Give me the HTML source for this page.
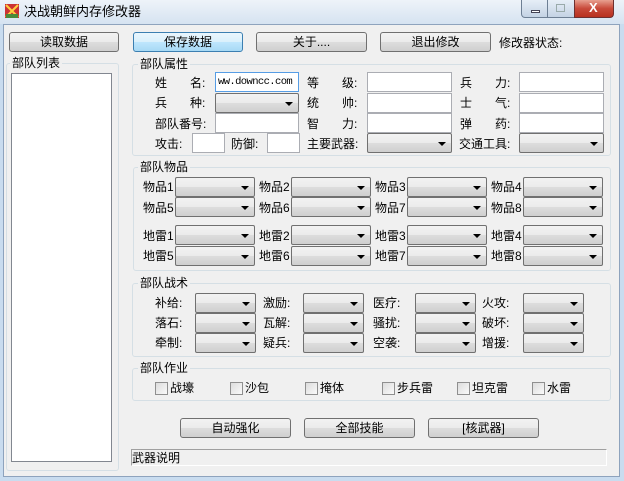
<!DOCTYPE html>
<html><head><meta charset="utf-8"><style>
*{box-sizing:border-box;margin:0;padding:0}
body{width:624px;height:481px;overflow:hidden;background:#c9dcef;font-family:"Liberation Sans","Noto Sans CJK SC","WenQuanYi Zen Hei",sans-serif;font-size:12px;color:#000;position:relative}
.a{position:absolute}
#tb{left:0;top:0;width:624px;height:24px;background:linear-gradient(#eef3f9,#d6e3f1)}
#cl{left:3px;top:24px;width:617px;height:453px;background:#f0f0f0;border:1px solid #8ea3bd}
.t{position:absolute;white-space:nowrap;line-height:14px}
.btn{position:absolute;height:20px;border:1px solid #707070;border-radius:3px;background:linear-gradient(#f2f2f2 0,#ebebeb 50%,#dddddd 51%,#cfcfcf 100%);text-align:center;line-height:18px;font-size:12px}
.btn.h{border-color:#3c7fb1;background:linear-gradient(#eaf6fd 0,#d9f0fc 50%,#bee6fd 51%,#a7d9f5 100%)}
.gb{position:absolute;border:1px solid #d5dfe5;border-radius:3px}
.gl{position:absolute;background:#f0f0f0;padding:0 2px;line-height:14px}
.in{position:absolute;height:20px;background:#fff;border:1px solid #abadb3;border-top-color:#abadb3}
.sel{position:absolute;height:20px;border:1px solid #707070;border-radius:2px;background:linear-gradient(#f2f2f2 0,#ebebeb 50%,#dddddd 51%,#cfcfcf 100%)}
.sel:after{content:"";position:absolute;right:5px;top:8px;border-left:4px solid transparent;border-right:4px solid transparent;border-top:4px solid #000}
.cb{position:absolute;width:13px;height:13px;border:1px solid #8f8f8f;background:linear-gradient(135deg,#dcdcdc,#fafafa)}
</style></head><body>
<div id="tb" class="a"></div>
<svg class="a" style="left:4px;top:3px" width="16" height="16"><rect x="1" y="1" width="14" height="14" fill="#c33"/><path d="M2 2L14 14M14 2L2 14" stroke="#ffd040" stroke-width="2"/><rect x="2" y="11" width="12" height="4" fill="#4a8a3a"/></svg>
<div class="t" style="left:24px;top:5px;font-size:13px">决战朝鲜内存修改器</div>
<div class="a" style="left:521px;top:0;width:27px;height:18px;border:1px solid #6d7f94;border-top:none;border-radius:0 0 0 4px;background:linear-gradient(#e6eef7,#c4d3e4)"><div class="a" style="left:9px;top:10px;width:9px;height:3px;background:#fff;border:1px solid #445"></div></div>
<div class="a" style="left:548px;top:0;width:26px;height:18px;border-bottom:1px solid #6d7f94;background:linear-gradient(#e6eef7,#c4d3e4)"><div class="a" style="left:8px;top:4px;width:9px;height:8px;border:1px solid #9aa;"></div></div>
<div class="a" style="left:574px;top:0;width:40px;height:18px;border:1px solid #6d3030;border-top:none;border-radius:0 0 4px 0;background:linear-gradient(#e8a090,#c84a3a 50%,#b8301f)"><div class="t" style="left:14px;top:1px;color:#fff;font-weight:bold;font-size:13px">X</div></div>
<div id="cl" class="a"></div>

<div class="btn" style="left:9px;top:32px;width:110px">读取数据</div>
<div class="btn h" style="left:133px;top:32px;width:110px">保存数据</div>
<div class="btn" style="left:256px;top:32px;width:111px">关于....</div>
<div class="btn" style="left:380px;top:32px;width:111px">退出修改</div>
<div class="t" style="left:499px;top:36px">修改器状态:</div>

<div class="gb" style="left:6px;top:63px;width:113px;height:408px"></div>
<div class="gl" style="left:10px;top:56px">部队列表</div>
<div class="in" style="left:11px;top:73px;width:101px;height:389px;border-color:#828790"></div>

<div class="gb" style="left:132px;top:64px;width:479px;height:92px"></div>
<div class="gl" style="left:138px;top:57px">部队属性</div>
<div class="t" style="left:155px;top:76px">姓</div><div class="t" style="left:190px;top:76px">名:</div>
<div class="in" style="left:215px;top:72px;width:84px;border-color:#569de5;font-family:'Liberation Mono',monospace;font-size:10.5px;line-height:18px;padding-left:2px;letter-spacing:-0.6px;overflow:hidden">ww.downcc.com</div>
<div class="t" style="left:307px;top:76px">等</div><div class="t" style="left:342px;top:76px">级:</div>
<div class="in" style="left:367px;top:72px;width:85px"></div>
<div class="t" style="left:460px;top:76px">兵</div><div class="t" style="left:495px;top:76px">力:</div>
<div class="in" style="left:519px;top:72px;width:85px"></div>

<div class="t" style="left:155px;top:96px">兵</div><div class="t" style="left:190px;top:96px">种:</div>
<div class="sel" style="left:215px;top:93px;width:84px"></div>
<div class="t" style="left:307px;top:96px">统</div><div class="t" style="left:342px;top:96px">帅:</div>
<div class="in" style="left:367px;top:93px;width:85px"></div>
<div class="t" style="left:460px;top:96px">士</div><div class="t" style="left:495px;top:96px">气:</div>
<div class="in" style="left:519px;top:93px;width:85px"></div>

<div class="t" style="left:155px;top:117px">部队番号:</div>
<div class="in" style="left:215px;top:113px;width:84px"></div>
<div class="t" style="left:307px;top:117px">智</div><div class="t" style="left:342px;top:117px">力:</div>
<div class="in" style="left:367px;top:113px;width:85px"></div>
<div class="t" style="left:460px;top:117px">弹</div><div class="t" style="left:495px;top:117px">药:</div>
<div class="in" style="left:519px;top:113px;width:85px"></div>

<div class="t" style="left:155px;top:137px">攻击:</div>
<div class="in" style="left:192px;top:133px;width:33px"></div>
<div class="t" style="left:231px;top:137px">防御:</div>
<div class="in" style="left:267px;top:133px;width:33px"></div>
<div class="t" style="left:307px;top:137px">主要武器:</div>
<div class="sel" style="left:367px;top:133px;width:85px"></div>
<div class="t" style="left:459px;top:137px">交通工具:</div>
<div class="sel" style="left:519px;top:133px;width:85px"></div>

<div class="gb" style="left:133px;top:167px;width:478px;height:104px"></div>
<div class="gl" style="left:138px;top:160px">部队物品</div>
<div class="t" style="left:143px;top:180px">物品1</div><div class="sel" style="left:175px;top:177px;width:80px"></div>
<div class="t" style="left:259px;top:180px">物品2</div><div class="sel" style="left:291px;top:177px;width:80px"></div>
<div class="t" style="left:375px;top:180px">物品3</div><div class="sel" style="left:407px;top:177px;width:80px"></div>
<div class="t" style="left:491px;top:180px">物品4</div><div class="sel" style="left:523px;top:177px;width:80px"></div>
<div class="t" style="left:143px;top:201px">物品5</div><div class="sel" style="left:175px;top:197px;width:80px"></div>
<div class="t" style="left:259px;top:201px">物品6</div><div class="sel" style="left:291px;top:197px;width:80px"></div>
<div class="t" style="left:375px;top:201px">物品7</div><div class="sel" style="left:407px;top:197px;width:80px"></div>
<div class="t" style="left:491px;top:201px">物品8</div><div class="sel" style="left:523px;top:197px;width:80px"></div>
<div class="t" style="left:143px;top:229px">地雷1</div><div class="sel" style="left:175px;top:225px;width:80px"></div>
<div class="t" style="left:259px;top:229px">地雷2</div><div class="sel" style="left:291px;top:225px;width:80px"></div>
<div class="t" style="left:375px;top:229px">地雷3</div><div class="sel" style="left:407px;top:225px;width:80px"></div>
<div class="t" style="left:491px;top:229px">地雷4</div><div class="sel" style="left:523px;top:225px;width:80px"></div>
<div class="t" style="left:143px;top:249px">地雷5</div><div class="sel" style="left:175px;top:246px;width:80px"></div>
<div class="t" style="left:259px;top:249px">地雷6</div><div class="sel" style="left:291px;top:246px;width:80px"></div>
<div class="t" style="left:375px;top:249px">地雷7</div><div class="sel" style="left:407px;top:246px;width:80px"></div>
<div class="t" style="left:491px;top:249px">地雷8</div><div class="sel" style="left:523px;top:246px;width:80px"></div>

<div class="gb" style="left:132px;top:283px;width:479px;height:74px"></div>
<div class="gl" style="left:138px;top:276px">部队战术</div>
<div class="t" style="left:155px;top:296px">补给:</div><div class="sel" style="left:195px;top:293px;width:61px"></div>
<div class="t" style="left:263px;top:296px">激励:</div><div class="sel" style="left:303px;top:293px;width:61px"></div>
<div class="t" style="left:373px;top:296px">医疗:</div><div class="sel" style="left:415px;top:293px;width:61px"></div>
<div class="t" style="left:482px;top:296px">火攻:</div><div class="sel" style="left:523px;top:293px;width:61px"></div>
<div class="t" style="left:155px;top:316px">落石:</div><div class="sel" style="left:195px;top:313px;width:61px"></div>
<div class="t" style="left:263px;top:316px">瓦解:</div><div class="sel" style="left:303px;top:313px;width:61px"></div>
<div class="t" style="left:373px;top:316px">骚扰:</div><div class="sel" style="left:415px;top:313px;width:61px"></div>
<div class="t" style="left:482px;top:316px">破坏:</div><div class="sel" style="left:523px;top:313px;width:61px"></div>
<div class="t" style="left:155px;top:336px">牵制:</div><div class="sel" style="left:195px;top:333px;width:61px"></div>
<div class="t" style="left:263px;top:336px">疑兵:</div><div class="sel" style="left:303px;top:333px;width:61px"></div>
<div class="t" style="left:373px;top:336px">空袭:</div><div class="sel" style="left:415px;top:333px;width:61px"></div>
<div class="t" style="left:482px;top:336px">增援:</div><div class="sel" style="left:523px;top:333px;width:61px"></div>

<div class="gb" style="left:132px;top:368px;width:479px;height:33px"></div>
<div class="gl" style="left:138px;top:361px">部队作业</div>
<div class="cb" style="left:155px;top:382px"></div><div class="t" style="left:170px;top:381px">战壕</div>
<div class="cb" style="left:230px;top:382px"></div><div class="t" style="left:245px;top:381px">沙包</div>
<div class="cb" style="left:305px;top:382px"></div><div class="t" style="left:320px;top:381px">掩体</div>
<div class="cb" style="left:382px;top:382px"></div><div class="t" style="left:397px;top:381px">步兵雷</div>
<div class="cb" style="left:457px;top:382px"></div><div class="t" style="left:472px;top:381px">坦克雷</div>
<div class="cb" style="left:532px;top:382px"></div><div class="t" style="left:547px;top:381px">水雷</div>

<div class="btn" style="left:180px;top:418px;width:111px">自动强化</div>
<div class="btn" style="left:304px;top:418px;width:111px">全部技能</div>
<div class="btn" style="left:428px;top:418px;width:111px">[核武器]</div>

<div class="a" style="left:131px;top:449px;width:476px;height:17px;border:1px solid;border-color:#a0a0a0 #fff #fff #a0a0a0;background:#f0f0f0"></div>
<div class="t" style="left:132px;top:451px">武器说明</div>
</body></html>
